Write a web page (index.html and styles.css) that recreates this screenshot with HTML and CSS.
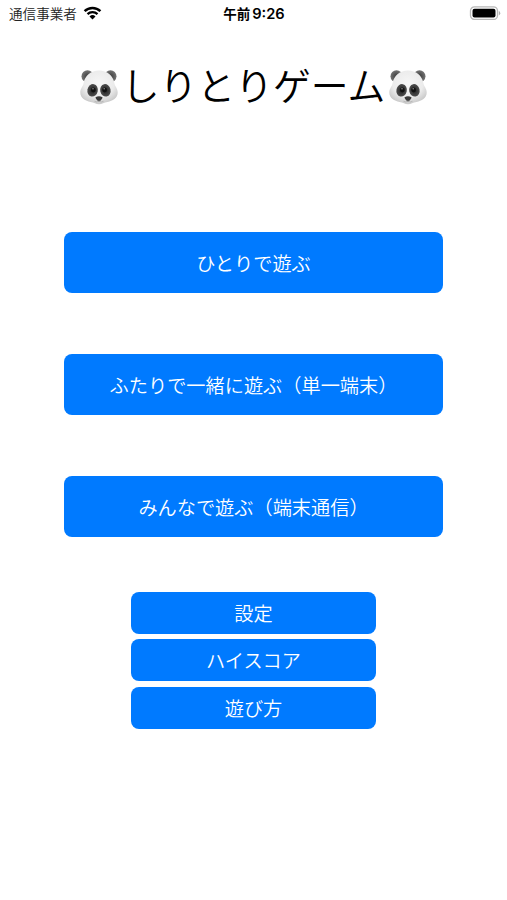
FILE: index.html
```
<!DOCTYPE html>
<html lang="ja">
<head>
    <meta charset="UTF-8">
    <meta name="viewport" content="width=device-width, initial-scale=1.0">
    <title>しりとりゲーム</title>
    <link rel="stylesheet" href="styles.css">
</head>
<body>
    <svg width="0" height="0" class="defs">
        <defs>
            <radialGradient id="face" cx="50%" cy="38%" r="62%">
                <stop offset="0" stop-color="#f6f6f6"/>
                <stop offset="0.65" stop-color="#ebebeb"/>
                <stop offset="1" stop-color="#c9c9c9"/>
            </radialGradient>
            <radialGradient id="ear">
                <stop offset="0" stop-color="#3c3c3c"/>
                <stop offset="1" stop-color="#737373"/>
            </radialGradient>
            <radialGradient id="patch">
                <stop offset="0" stop-color="#222"/>
                <stop offset="1" stop-color="#4c4c4c"/>
            </radialGradient>
            <symbol id="panda" viewBox="0 0 38 36">
                <circle cx="7.5" cy="7.3" r="6" fill="url(#ear)"/>
                <circle cx="30.5" cy="7.3" r="6" fill="url(#ear)"/>
                <path d="M19 1.5C27 1.5 33.2 6.5 34.3 14C35 17.5 37.7 19.5 37.7 23.5C37.7 29 32.5 32 27.5 33C24 33.5 22 35.2 19 35.2S14 33.5 10.5 33C5.5 32 .3 29 .3 23.5C.3 19.5 3 17.5 3.7 14C4.8 6.5 11 1.5 19 1.5Z" fill="url(#face)"/>
                <ellipse cx="12.6" cy="21.3" rx="5.2" ry="6.3" transform="rotate(12 12.6 21.3)" fill="url(#patch)"/>
                <ellipse cx="25.4" cy="21.3" rx="5.2" ry="6.3" transform="rotate(-12 25.4 21.3)" fill="url(#patch)"/>
                <circle cx="13.4" cy="21" r="2.4" fill="#111"/>
                <circle cx="24.6" cy="21" r="2.4" fill="#111"/>
                <circle cx="13" cy="19.8" r=".8" fill="#888"/>
                <circle cx="24.2" cy="19.8" r=".8" fill="#888"/>
                <path d="M15.5 28.3Q19 26.2 22.5 28.3Q22.5 30 19 32.8Q15.5 30 15.5 28.3Z" fill="#3a3a3a"/>
                <path d="M14.5 32.3Q17 34 19 31.8Q21 34 23.5 32.3" fill="none" stroke="#aaa" stroke-width=".7"/>
            </symbol>
        </defs>
    </svg>

    <div class="status">
        <div class="carrier">
            <span>通信事業者</span>
            <svg class="wifi" viewBox="0 0 18 14">
                <path d="M1.1 5.2A11.3 11.3 0 0 1 16.9 5.2" fill="none" stroke="#000" stroke-width="2.5"/>
                <path d="M4 8.2A7.2 7.2 0 0 1 14 8.2" fill="none" stroke="#000" stroke-width="2.3"/>
                <path d="M6 10.4A4.3 4.3 0 0 1 12 10.4L9 13.4Z"/>
            </svg>
        </div>
        <div class="time"><span>午前</span><span class="clock">9:26</span></div>
        <svg class="battery" viewBox="0 0 32 14">
            <rect x="1.5" y=".8" width="27" height="12.6" rx="4" fill="#fff" stroke="#b8b8b8" stroke-width="1.3"/>
            <rect x="3.5" y="2.7" width="23" height="8.8" rx="2"/>
            <path d="M29.8 5A2.4 2.4 0 0 1 29.8 9.4Z" fill="#b0b0b0"/>
        </svg>
    </div>

    <h1>
        <svg class="panda"><use href="#panda"/></svg>
        <span>しりとりゲーム</span>
        <svg class="panda"><use href="#panda"/></svg>
    </h1>

    <div class="play">
        <button>ひとりで遊ぶ</button>
        <button>ふたりで一緒に遊ぶ（単一端末）</button>
        <button>みんなで遊ぶ（端末通信）</button>
    </div>

    <div class="menu">
        <button>設定</button>
        <button>ハイスコア</button>
        <button>遊び方</button>
    </div>
</body>
</html>
```

FILE: styles.css
```
*{
    box-sizing: border-box;
    margin: 0;
    padding: 0;
}
body{
    height: 900px;
    background: #fff;
    color: #000;
    font-family: "Noto Sans CJK JP", sans-serif;
    overflow: hidden;
}
.defs{
    position: absolute;
}
.status{
    display: grid;
    grid-template-columns: 1fr auto 1fr;
    align-items: center;
    height: 27px;
    padding: 0 6px 0 9px;
}
.carrier{
    display: flex;
    align-items: center;
    gap: 6px;
    color: #222;
    font-size: 13.6px;
    font-weight: 350;
    line-height: 24px;
}
.carrier span, .time span:first-child{
    margin-top: -2px;
}
.wifi{
    width: 19px;
    height: 14px;
    margin-top: -1px;
}
.time{
    display: flex;
    align-items: center;
    gap: 2px;
    margin-left: -2px;
    font-size: 13.5px;
    font-weight: 700;
    line-height: 24px;
}
.clock{
    font-family: Inter, sans-serif;
    font-size: 14.6px;
    font-weight: 600;
}
.battery{
    justify-self: end;
    width: 32px;
    height: 14px;
    margin-top: -1px;
}
h1{
    display: flex;
    justify-content: center;
    align-items: center;
    gap: 4px;
    height: 60px;
    margin-top: 29px;
    font-size: 37.8px;
    font-weight: 350;
    line-height: 60px;
}
h1 span{
    margin-top: -4px;
}
.panda{
    width: 38px;
    height: 36px;
    margin-top: 1px;
}
button{
    display: block;
    border: none;
    border-radius: 8px;
    background: #007aff;
    color: #fff;
    font-family: inherit;
    font-size: 19.2px;
    font-weight: 350;
}
.play{
    display: grid;
    gap: 61px;
    width: 379px;
    margin: 116px auto 0;
}
.play button{
    height: 61px;
}
.menu{
    display: grid;
    gap: 5.8px;
    width: 245px;
    margin: 54.5px auto 0;
}
.menu button{
    height: 42px;
}
```
